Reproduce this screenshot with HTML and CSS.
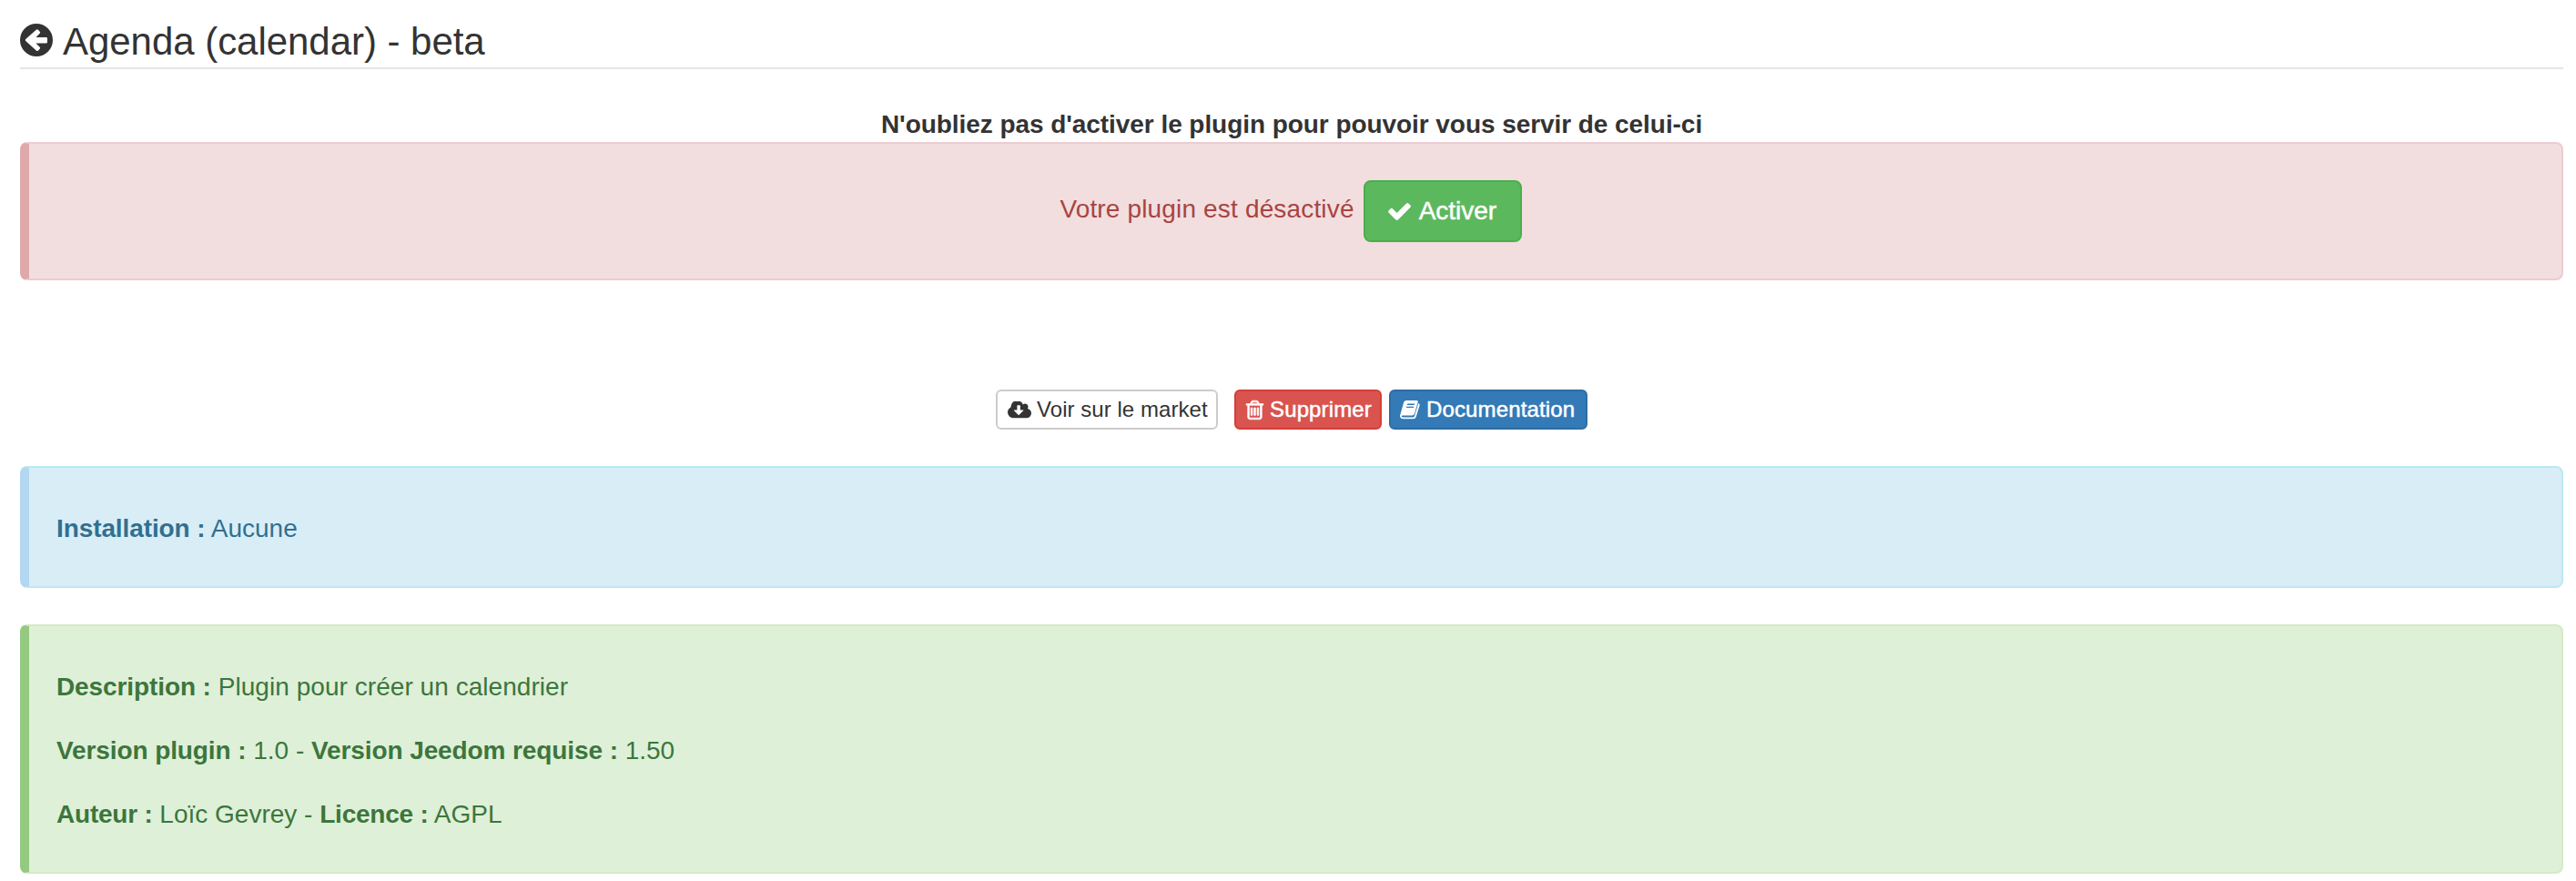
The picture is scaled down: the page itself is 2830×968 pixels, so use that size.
FILE: index.html
```html
<!DOCTYPE html>
<html lang="fr">
<head>
<meta charset="utf-8">
<title>Agenda (calendar) - beta</title>
<link rel="stylesheet" href="styles.css">
</head>
<body>
<main class="page">
  <h1 class="legend">
    <svg class="icon icon-back" viewBox="0 0 36 36"><path fill-rule="evenodd" d="M18 0a18 18 0 1 1 0 36a18 18 0 1 1 0-36zM30 16.200q0-1.200-1.200-1.200H17.500l4.200-4.200q.9-1 0-2L20 6.800q-1.200-1-2.200 0L6.200 17q-.9 1 0 2l11.600 10.600q1.200 1 2.200 0l1.700-1.800q.9-1 0-2l-4.200-4.400h11.300q1.200 0 1.200-1.200z"/></svg>
    <span class="legend-text">Agenda (calendar) - beta</span>
  </h1>

  <p class="reminder">N'oubliez pas d'activer le plugin pour pouvoir vous servir de celui-ci</p>
  <section class="alert alert-danger">
    <span class="state">Votre plugin est désactivé</span>
    <button class="btn btn-success">
      <svg class="icon icon-check" viewBox="121 334 1550 1188"><path d="M1671 566q0 40-28 68l-724 724-136 136q-28 28-68 28t-68-28l-136-136-362-362q-28-28-28-68t28-68l136-136q28-28 68-28t68 28l294 295 656-657q28-28 68-28t68 28l136 136q28 28 28 68z"/></svg>
      <span>Activer</span>
    </button>
  </section>

  <nav class="actions">
    <button class="btn btn-sm btn-default">
      <svg class="icon icon-cloud" viewBox="-64 256 1920 1280"><path d="M1216 928q0-14-9-23t-23-9h-224v-352q0-13-9.500-22.500t-22.500-9.500h-192q-13 0-22.500 9.500t-9.500 22.500v352h-224q-13 0-22.500 9.500t-9.500 22.500q0 14 9 23l352 352q9 9 23 9t23-9l351-351q10-12 10-24zm640 224q0 159-112.500 271.500t-271.500 112.500h-1088q-185 0-316.500-131.500t-131.500-316.500q0-130 70-240t188-165q-2-30-2-43 0-212 150-362t362-150q156 0 285.500 87t188.500 231q71-62 166-62 106 0 181 75t75 181q0 76-41 138 130 31 213.500 135.500t83.500 238.500z"/></svg>
      <span>Voir sur le market</span>
    </button>
    <button class="btn btn-sm btn-danger">
      <svg class="icon icon-trash" viewBox="192 128 1408 1536"><path d="M704 736v576q0 14-9 23t-23 9h-64q-14 0-23-9t-9-23v-576q0-14 9-23t23-9h64q14 0 23 9t9 23zm256 0v576q0 14-9 23t-23 9h-64q-14 0-23-9t-9-23v-576q0-14 9-23t23-9h64q14 0 23 9t9 23zm256 0v576q0 14-9 23t-23 9h-64q-14 0-23-9t-9-23v-576q0-14 9-23t23-9h64q14 0 23 9t9 23zm128 724v-948h-896v948q0 22 7 40.500t14.500 27 10.500 8.500h832q3 0 10.500-8.500t14.500-27 7-40.500zm-672-1076h448l-48-117q-7-9-17-11h-317q-10 2-17 11zm928 32v64q0 14-9 23t-23 9h-96v948q0 83-47 143.500t-113 60.500h-832q-66 0-113-58.500t-47-141.500v-952h-96q-14 0-23-9t-9-23v-64q0-14 9-23t23-9h309l70-167q15-37 54-63t79-26h320q40 0 79 26t54 63l70 167h309q14 0 23 9t9 23z"/></svg>
      <span>Supprimer</span>
    </button>
    <button class="btn btn-sm btn-primary">
      <svg class="icon icon-book" viewBox="0 0 22 21"><path fill-rule="evenodd" d="M6.700 0H18q2.200 0 1.700 2L16 14.500q-.6 2-2.700 2H3q-1.600 0-1.300 1.100.3.900 1.600.9h11q1.300 0 1.700-1.300L20.300 3q1.800.7 1.300 2.400L17.700 18q-.7 2.300-3 2.300H3.400Q.9 20.300.1 17.900q-.3-1.100.3-2.300L4 2.600Q4.600 0 6.700 0zM8.200 3.500l-.4 1.400h8.100l.4-1.400zM7.300 6.700l-.4 1.400H15l.4-1.400z"/></svg>
      <span>Documentation</span>
    </button>
  </nav>

  <section class="alert alert-info">
    <p class="line"><b>Installation :</b> Aucune</p>
  </section>

  <section class="alert alert-success">
    <p class="line line-description"><b>Description :</b> Plugin pour créer un calendrier</p>
    <p class="line"><b>Version plugin :</b> 1.0 - <b>Version Jeedom requise :</b> 1.50</p>
    <p class="line line-author"><b>Auteur :</b> Loïc Gevrey - <b>Licence :</b> AGPL</p>
  </section>
</main>
</body>
</html>
```
FILE: styles.css
```css
* { box-sizing: border-box; }
body {
  margin: 0;
  background: #fff;
  color: #333;
  font: 28px/40px "Liberation Sans", Arial, sans-serif;
}
h1, p { margin: 0; }
.page { padding: 14px 14px 0 22px; }
.icon { display: block; flex: none; fill: currentColor; }

.legend {
  display: flex;
  align-items: center;
  gap: 11px;
  height: 62px;
  border-bottom: 2px solid #e5e5e5;
  font-size: 42px;
  font-weight: 400;
  letter-spacing: -0.04px;
}
.legend-text { padding-top: 3px; }
.icon-back { width: 36px; height: 36px; }

.reminder {
  height: 39px;
  margin-top: 41px;
  text-align: center;
  font-weight: 700;
  letter-spacing: -0.06px;
}

.alert {
  border: 2px solid;
  border-left-width: 10px;
  border-radius: 8px;
}
.alert-danger {
  display: flex;
  justify-content: center;
  align-items: flex-start;
  gap: 10px;
  height: 152px;
  padding: 40px 10px 0 0;
  background: #f2dede;
  border-color: #ebccd1;
  border-left-color: #dfa9aa;
  color: #a94442;
}
.state { margin-top: 12px; letter-spacing: 0.16px; }

.btn {
  display: flex;
  align-items: center;
  border: 2px solid;
  border-radius: 8px;
  color: #fff;
  font: inherit;
  white-space: nowrap;
  -webkit-text-stroke: 0.5px currentColor;
}
.btn-success {
  width: 174px;
  height: 68px;
  gap: 9px;
  padding: 0 0 0 25px;
  background: #5cb85c;
  border-color: #4cae4c;
}
.icon-check { width: 25px; height: 19px; }

.actions {
  display: flex;
  justify-content: center;
  margin: 120px 0 40px;
}
.btn-sm {
  height: 44px;
  padding: 0 0 0 11px;
  gap: 7px;
  border-radius: 6px;
  font-size: 24px;
  letter-spacing: 0.14px;
}
.btn-default {
  width: 244px;
  margin-right: 18px;
  gap: 6px;
  background: #fff;
  border-color: #ccc;
  color: #333;
  letter-spacing: 0.05px;
  -webkit-text-stroke: 0;
}
.btn-danger { width: 162px; margin-right: 8px; background: #d9534f; border-color: #d43f3a; }
.btn-primary { width: 218px; padding-left: 10px; background: #337ab7; border-color: #2e6da4; }
.icon-cloud { width: 26px; height: 19px; }
.icon-trash { width: 19px; height: 21px; overflow: visible; stroke: currentColor; stroke-width: 50; }
.icon-book { width: 22px; height: 21px; }

.alert-info, .alert-success { padding: 47px 30px 0; }
.alert-info {
  height: 134px;
  background: #d9edf7;
  border-color: #bce8f1;
  border-left-color: #b3d7f0;
  color: #31708f;
}
.alert-success {
  height: 274px;
  margin-top: 40px;
  background: #dff0d8;
  border-color: #d6e9c6;
  border-left-color: #93c980;
  color: #3c763d;
}
.line + .line { margin-top: 30px; }
.line b { letter-spacing: -0.1px; }
.line-description { letter-spacing: 0.05px; }
.line-author b { letter-spacing: -0.22px; }
```
